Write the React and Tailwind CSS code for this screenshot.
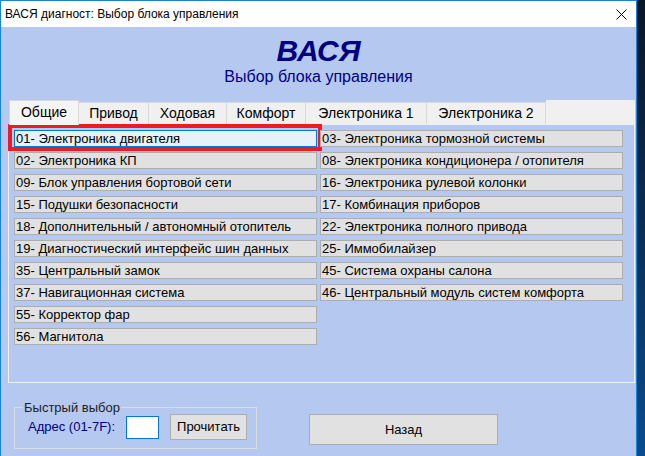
import { useState } from "react";

const leftUnits = [
  "01- Электроника двигателя",
  "02- Электроника КП",
  "09- Блок управления бортовой сети",
  "15- Подушки безопасности",
  "18- Дополнительный / автономный отопитель",
  "19- Диагностический интерфейс шин данных",
  "35- Центральный замок",
  "37- Навигационная система",
  "55- Корректор фар",
  "56- Магнитола",
];

const rightUnits = [
  "03- Электроника тормозной системы",
  "08- Электроника кондиционера / отопителя",
  "16- Электроника рулевой колонки",
  "17- Комбинация приборов",
  "22- Электроника полного привода",
  "25- Иммобилайзер",
  "45- Система охраны салона",
  "46- Центральный модуль систем комфорта",
];

const tabs = [
  { label: "Общие", width: "w-[70px]" },
  { label: "Привод", width: "w-[70px]" },
  { label: "Ходовая", width: "w-[78px]" },
  { label: "Комфорт", width: "w-[79px]" },
  { label: "Электроника 1", width: "w-[121px]" },
  { label: "Электроника 2", width: "w-[119px]" },
];

function UnitButton({ label, hot }) {
  return (
    <div className="relative flex">
      <button
        className={`block w-[303px] h-[17px] pl-[1px] text-left text-[13px] leading-[15px] text-black whitespace-nowrap border ${
          hot ? "bg-[#e5f1fb] border-[#0078d7]" : "bg-[#e1e1e1] border-[#adadad]"
        }`}
      >
        {label}
      </button>
      {hot && (
        <span className="absolute -left-[6px] -right-[5px] -top-[6px] -bottom-[4px] border-4 border-[#ec1c24] pointer-events-none" />
      )}
    </div>
  );
}

function TabStrip({ active }) {
  return (
    <div className="ml-[7px] w-[627px] h-[24px] flex items-end">
      <div className="w-[1px]" />
      {tabs.map((t, i) =>
        i === active ? (
          <div
            key={t.label}
            className={`${t.width} h-[25px] -mb-[1px] z-10 bg-[#f5f5f5] border border-b-0 border-[#d9d9d9] flex items-center justify-center text-[14px] pb-[2px]`}
          >
            {t.label}
          </div>
        ) : (
          <div
            key={t.label}
            className={`${t.width} h-[22px] bg-[#f0f0f0] border border-l-0 border-b-0 border-[#d9d9d9] flex items-center justify-center text-[14px]`}
          >
            {t.label}
          </div>
        )
      )}
      <div className="flex-1 h-[24px] bg-[#f0f0f0]" />
    </div>
  );
}

export default function App() {
  const [active] = useState(0);

  return (
    <div
      className="w-[645px] h-[456px] overflow-hidden flex bg-gradient-to-b from-[#0a1628] via-[#0b2e55] to-[#0a4c8e]"
      style={{ fontFamily: '"Liberation Sans", Arial, sans-serif' }}
    >
      <div className="w-[637px] h-full flex flex-col border-l border-t border-r border-[#1883d7] bg-[#b4c8f0]">
        {/* title bar */}
        <div className="h-[26px] shrink-0 bg-white flex items-center justify-between pl-[4px] pr-[8px]">
          <span className="text-[12px] text-black">ВАСЯ диагност: Выбор блока управления</span>
          <svg width="11" height="11" viewBox="0 0 11 11" className="mr-[1px]">
            <path d="M0.5 0.5 L10.5 10.5 M10.5 0.5 L0.5 10.5" stroke="#000" strokeWidth="1" />
          </svg>
        </div>

        {/* header */}
        <div className="flex flex-col items-center pt-[9px]">
          <div className="text-[30px] leading-[30px] font-bold italic text-[#000080]">ВАСЯ</div>
          <div className="mt-[3px] text-[16px] leading-[16px] text-[#000080]">Выбор блока управления</div>
        </div>

        <div className="mt-[15px]">
          <TabStrip active={active} />
          <div className="ml-[7px] w-[627px] h-[259px] border border-[#f0f0f0] pt-[5px] pl-[5px] flex items-start gap-[3px]">
            <div className="flex flex-col gap-[5px]">
              {leftUnits.map((u, i) => (
                <UnitButton key={u} label={u} hot={i === 0} />
              ))}
            </div>
            <div className="flex flex-col gap-[5px]">
              {rightUnits.map((u) => (
                <UnitButton key={u} label={u} />
              ))}
            </div>
          </div>
        </div>

        {/* quick select + back */}
        <div className="flex items-start">
          <fieldset className="ml-[13px] mt-[17px] w-[243px] h-[49px] border border-[#dcdcdc] pl-[10px]">
            <legend className="ml-[-2px] px-[1px] text-[13px] leading-[15px] text-[#1e1e1e]">Быстрый выбор</legend>
            <div className="flex items-center -mt-[1px] whitespace-nowrap">
              <span className="ml-[3px] text-[13px] text-[#000080]">Адрес (01-7F):</span>
              <input
                type="text"
                className="ml-[11px] w-[33px] h-[23px] shrink-0 bg-white border border-[#0078d7] outline-none"
              />
              <button className="ml-[11px] w-[77px] h-[26px] shrink-0 bg-[#e1e1e1] border border-[#adadad] text-[13px] text-black">
                Прочитать
              </button>
            </div>
          </fieldset>
          <button className="ml-[52px] mt-[31px] w-[189px] h-[31px] bg-[#e1e1e1] border border-[#adadad] text-[13px] text-black">
            Назад
          </button>
        </div>
      </div>
    </div>
  );
}
